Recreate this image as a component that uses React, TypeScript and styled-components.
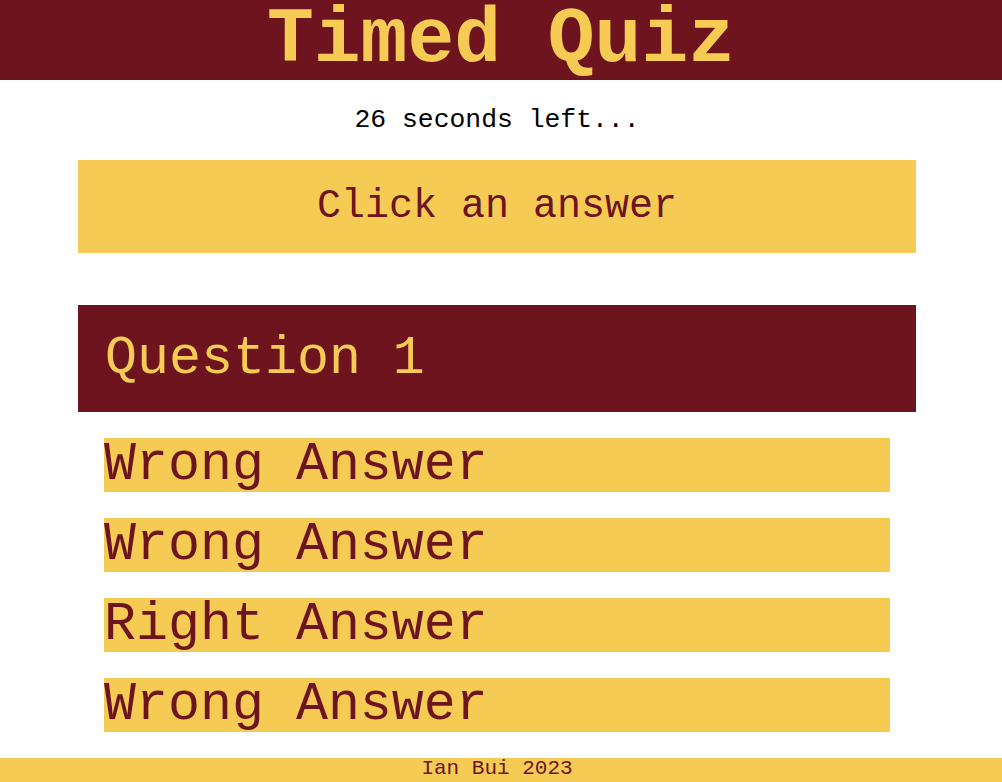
import React from "react";
import styled, { createGlobalStyle } from "styled-components";

const maroon = "#6d141e";
const yellow = "#f6cb54";
const mono = `"Courier New", "Liberation Mono", monospace`;

const Global = createGlobalStyle`
  html, body { margin: 0; padding: 0; background: #ffffff; }
  body { font-family: ${mono}; }
`;

const Header = styled.header`
  background: ${maroon};
  height: 80px;
  box-sizing: border-box;
  padding-top: 2px;
  display: flex;
  justify-content: center;
  align-items: flex-start;
`;

const Title = styled.h1`
  margin: 0;
  font-family: ${mono};
  font-weight: 700;
  font-size: 78px;
  line-height: 76px;
  color: ${yellow};
`;

const Main = styled.main`
  width: 838px;
  margin-left: 78px;
  display: flex;
  flex-direction: column;
`;

const Timer = styled.p`
  margin: 0;
  height: 80px;
  box-sizing: border-box;
  padding-bottom: 1px;
  display: flex;
  align-items: center;
  justify-content: center;
  font-family: ${mono};
  font-size: 26.4px;
  color: #000;
`;

const Status = styled.div`
  background: ${yellow};
  color: ${maroon};
  height: 93px;
  box-sizing: border-box;
  padding-top: 24px;
  text-align: center;
  font-family: ${mono};
  font-size: 40px;
  line-height: 45px;
`;

const QuestionCard = styled.section`
  margin-top: 52px;
  display: flex;
  flex-direction: column;
  gap: 26px;
`;

const QuestionTitle = styled.h2`
  margin: 0;
  background: ${maroon};
  color: ${yellow};
  height: 107px;
  box-sizing: border-box;
  padding: 24px 27px 0;
  font-family: ${mono};
  font-weight: 400;
  font-size: 53.3px;
  line-height: 60px;
`;

const AnswerList = styled.div`
  display: flex;
  flex-direction: column;
  gap: 26px;
  padding: 0 26px;
`;

const AnswerButton = styled.button`
  all: unset;
  display: block;
  background: ${yellow};
  color: ${maroon};
  height: 54px;
  font-family: ${mono};
  font-size: 53.3px;
  line-height: 54px;
  cursor: pointer;
  white-space: nowrap;
`;

const Footer = styled.footer`
  margin-top: 26px;
  background: ${yellow};
  color: ${maroon};
  height: 24px;
  display: flex;
  justify-content: center;
  padding-right: 8px;
  font-family: ${mono};
  font-size: 21px;
  line-height: 22px;
`;

const answers = ["Wrong Answer", "Wrong Answer", "Right Answer", "Wrong Answer"];

export default function App() {
  return (
    <>
      <Global />
      <Header>
        <Title>Timed Quiz</Title>
      </Header>
      <Main>
        <Timer>26 seconds left...</Timer>
        <Status>Click an answer</Status>
        <QuestionCard>
          <QuestionTitle>Question 1</QuestionTitle>
          <AnswerList>
            {answers.map((a, i) => (
              <AnswerButton key={i}>{a}</AnswerButton>
            ))}
          </AnswerList>
        </QuestionCard>
      </Main>
      <Footer>Ian Bui 2023</Footer>
    </>
  );
}
